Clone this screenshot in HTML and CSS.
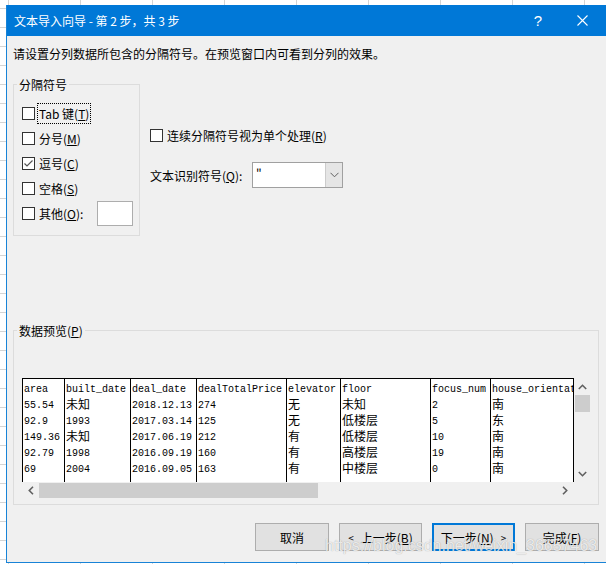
FILE: index.html
```html
<!DOCTYPE html>
<html lang="zh">
<head>
    <meta charset="UTF-8">
    <title>文本导入向导 - 第 2 步，共 3 步</title>
    <link rel="stylesheet" href="styles.css">
</head>
<body>
    <div class="dialog">
        <div class="titlebar">
            <span class="title">文本导入向导 - 第 2 步，共 3 步</span>
            <span class="help">?</span>
            <span class="close">
                <svg width="11" height="11" viewBox="0 0 11 11"><path d="M0.5 0.5L10.5 10.5M10.5 0.5L0.5 10.5" stroke="#fff" stroke-width="1.1" fill="none"/></svg>
            </span>
        </div>
        <div class="content">
            <p class="intro">请设置分列数据所包含的分隔符号。在预览窗口内可看到分列的效果。</p>
            <div class="options">
                <fieldset class="group delims">
                    <legend>分隔符号</legend>
                    <div class="opt"><span class="box"></span><span class="focus">Tab 键(<u>T</u>)</span></div>
                    <div class="opt"><span class="box"></span>分号(<u>M</u>)</div>
                    <div class="opt"><span class="box"><svg width="11" height="11" viewBox="0 0 11 11"><path d="M1.5 5.5L4 8L9.5 2.5" stroke="#555" stroke-width="1.2" fill="none"/></svg></span>逗号(<u>C</u>)</div>
                    <div class="opt"><span class="box"></span>空格(<u>S</u>)</div>
                    <div class="opt"><span class="box"></span>其他(<u>O</u>):<span class="other-input"></span></div>
                </fieldset>
                <div class="side">
                    <div class="opt short"><span class="box"></span>连续分隔符号视为单个处理(<u>R</u>)</div>
                    <div class="qual">
                        <span class="qual-label">文本识别符号(<u>Q</u>):</span>
                        <div class="combo">
                            <span class="val">"</span>
                            <span class="drop"><svg width="9" height="6" viewBox="0 0 9 6"><path d="M0.5 0.8L4.5 4.8L8.5 0.8" stroke="#606060" stroke-width="1" fill="none"/></svg></span>
                        </div>
                    </div>
                </div>
            </div>
            <fieldset class="group preview">
                <legend>数据预览(<u>P</u>)</legend>
                <div class="pv-main">
                    <div class="grid">
                        <div class="col" style="width: 42px">
                            <div class="cell">area</div>
                            <div class="cell">55.54</div>
                            <div class="cell">92.9</div>
                            <div class="cell">149.36</div>
                            <div class="cell">92.79</div>
                            <div class="cell">69</div>
                        </div>
                        <div class="col" style="width: 66px">
                            <div class="cell">built_date</div>
                            <div class="cell zh">未知</div>
                            <div class="cell">1993</div>
                            <div class="cell zh">未知</div>
                            <div class="cell">1998</div>
                            <div class="cell">2004</div>
                        </div>
                        <div class="col" style="width: 66px">
                            <div class="cell">deal_date</div>
                            <div class="cell">2018.12.13</div>
                            <div class="cell">2017.03.14</div>
                            <div class="cell">2017.06.19</div>
                            <div class="cell">2016.09.19</div>
                            <div class="cell">2016.09.05</div>
                        </div>
                        <div class="col" style="width: 90px">
                            <div class="cell">dealTotalPrice</div>
                            <div class="cell">274</div>
                            <div class="cell">125</div>
                            <div class="cell">212</div>
                            <div class="cell">160</div>
                            <div class="cell">163</div>
                        </div>
                        <div class="col" style="width: 54px">
                            <div class="cell">elevator</div>
                            <div class="cell zh">无</div>
                            <div class="cell zh">无</div>
                            <div class="cell zh">有</div>
                            <div class="cell zh">有</div>
                            <div class="cell zh">有</div>
                        </div>
                        <div class="col" style="width: 90px">
                            <div class="cell">floor</div>
                            <div class="cell zh">未知</div>
                            <div class="cell zh">低楼层</div>
                            <div class="cell zh">低楼层</div>
                            <div class="cell zh">高楼层</div>
                            <div class="cell zh">中楼层</div>
                        </div>
                        <div class="col" style="width: 60px">
                            <div class="cell">focus_num</div>
                            <div class="cell">2</div>
                            <div class="cell">5</div>
                            <div class="cell">10</div>
                            <div class="cell">19</div>
                            <div class="cell">0</div>
                        </div>
                        <div class="col" style="width: 83px">
                            <div class="cell">house_orientat</div>
                            <div class="cell zh">南</div>
                            <div class="cell zh">东</div>
                            <div class="cell zh">南</div>
                            <div class="cell zh">南</div>
                            <div class="cell zh">南</div>
                        </div>
                    </div>
                    <div class="vscroll">
                        <span class="arrow"><svg width="9" height="6" viewBox="0 0 9 6"><path d="M0.8 5L4.5 1.3L8.2 5" stroke="#606060" stroke-width="1.6" fill="none"/></svg></span>
                        <span class="vthumb"></span>
                        <span class="spacer"></span>
                        <span class="arrow"><svg width="9" height="6" viewBox="0 0 9 6"><path d="M0.8 1L4.5 4.7L8.2 1" stroke="#606060" stroke-width="1.6" fill="none"/></svg></span>
                    </div>
                </div>
                <div class="hrow">
                    <div class="hscroll">
                        <span class="arrow"><svg width="6" height="9" viewBox="0 0 6 9"><path d="M5 0.8L1.3 4.5L5 8.2" stroke="#606060" stroke-width="1.6" fill="none"/></svg></span>
                        <span class="hthumb"></span>
                        <span class="spacer"></span>
                        <span class="arrow"><svg width="6" height="9" viewBox="0 0 6 9"><path d="M1 0.8L4.7 4.5L1 8.2" stroke="#606060" stroke-width="1.6" fill="none"/></svg></span>
                    </div>
                    <div class="corner"></div>
                </div>
            </fieldset>
            <div class="buttons">
                <button class="btn" style="width: 74px">取消</button>
                <button class="btn" style="width: 83px"><span class="lt">&lt;</span>上一步(<u>B</u>)</button>
                <button class="btn primary" style="width: 83px">下一步(<u>N</u>)<span class="gt">&gt;</span></button>
                <button class="btn" style="width: 74px">完成(<u>F</u>)</button>
            </div>
        </div>
        <div class="watermark">https://blog.csdn.net/weixin_36657463</div>
    </div>
</body>
</html>
```

FILE: styles.css
```css
html, body {
    margin: 0;
    padding: 0;
    height: 100%;
    overflow: hidden;
}
body {
    background-color: #fff;
    background-image:
        linear-gradient(to right, #d4d4d4 1px, transparent 1px),
        linear-gradient(to bottom, #d4d4d4 1px, transparent 1px);
    background-size: 72px 100%, 100% 19px;
    background-position: 8px 0, 0 8px;
    font-family: "Noto Sans CJK SC", "Noto Sans", sans-serif;
    font-size: 12px;
    color: #000;
}
.dialog {
    position: relative;
    box-sizing: border-box;
    width: 602px;
    height: 558px;
    margin: 5px 0 0 6px;
    border: 1px solid #1883d7;
    border-top: none;
    background: #f0f0f0;
    display: flex;
    flex-direction: column;
}
.titlebar {
    display: flex;
    align-items: center;
    height: 31px;
    flex: none;
    background: #0078d7;
    color: #fff;
    padding-left: 7px;
}
.title {
    flex: 1;
    line-height: 17px;
}
.help {
    width: 42px;
    text-align: center;
    font: 15px "Liberation Sans", sans-serif;
}
.close {
    width: 46px;
    margin-right: 2px;
    display: flex;
    justify-content: center;
}
.content {
    flex: 1;
    padding: 9px 8px 0 6px;
    display: flex;
    flex-direction: column;
}
.intro {
    margin: 0;
    line-height: 17px;
}
.options {
    display: flex;
    margin-top: 14px;
}
.group {
    margin: 0;
    min-width: 0;
    border: 1px solid #dcdcdc;
}
.group legend {
    padding: 0 2px;
    margin-left: -5px;
    line-height: 17px;
}
.delims {
    box-sizing: border-box;
    width: 127px;
    padding: 8px 0 9px 8px;
}
.opt {
    display: flex;
    align-items: center;
    height: 25px;
    line-height: 17px;
    white-space: nowrap;
}
.opt.short {
    height: 17px;
}
.box {
    box-sizing: border-box;
    width: 13px;
    height: 13px;
    flex: none;
    margin-right: 4px;
    border: 1px solid #333;
    background: #fff;
    display: flex;
    align-items: center;
    justify-content: center;
}
.focus {
    outline: 1px dotted #000;
    outline-offset: 1px;
}
.other-input {
    box-sizing: border-box;
    width: 36px;
    height: 25px;
    margin-left: auto;
    margin-right: 6px;
    border: 1px solid #adadad;
    background: #fff;
}
.side {
    margin-left: 10px;
    padding-top: 51px;
}
.qual {
    display: flex;
    align-items: center;
    margin-top: 18px;
}
.qual-label {
    width: 102px;
    line-height: 17px;
}
.combo {
    box-sizing: border-box;
    width: 91px;
    height: 26px;
    border: 1px solid #a0a0a0;
    background: #fff;
    display: flex;
}
.combo .val {
    flex: 1;
    padding-left: 3px;
    line-height: 22px;
}
.combo .drop {
    width: 16px;
    background: #e5e5e5;
    border-left: 1px solid #cccccc;
    display: flex;
    align-items: center;
    justify-content: center;
}
.preview {
    margin-top: 86px;
    padding: 39px 7px 5px 8px;
}
.pv-main {
    display: flex;
    height: 104px;
}
.grid {
    box-sizing: border-box;
    display: flex;
    width: 551px;
    border-top: 1px solid #000;
    background: #fff;
    overflow: hidden;
    font: 10px "Liberation Mono", "Noto Sans CJK SC", monospace;
}
.col {
    box-sizing: border-box;
    flex: none;
    padding: 1px 0 0 1px;
    border-left: 1px solid #000;
    overflow: hidden;
    white-space: nowrap;
}
.cell {
    box-sizing: border-box;
    height: 16px;
    padding-top: 2px;
    line-height: 16px;
}
.cell.zh {
    padding-top: 0;
    font: 12px "Noto Sans CJK SC", sans-serif;
    line-height: 16px;
}
.vscroll {
    box-sizing: border-box;
    width: 17px;
    border-left: 1px solid #000;
    display: flex;
    flex-direction: column;
}
.vscroll .arrow {
    height: 17px;
    display: flex;
    align-items: center;
    justify-content: center;
}
.vthumb {
    height: 17px;
    margin-left: 1px;
    background: #cdcdcd;
}
.spacer {
    flex: 1;
}
.hrow {
    display: flex;
    height: 17px;
}
.hscroll {
    width: 551px;
    display: flex;
    align-items: center;
}
.hscroll .arrow {
    width: 17px;
    display: flex;
    justify-content: center;
}
.hthumb {
    width: 279px;
    height: 15px;
    background: #cdcdcd;
}
.corner {
    flex: 1;
}
.buttons {
    display: flex;
    justify-content: flex-end;
    gap: 10px;
    margin-top: 18px;
}
.btn {
    box-sizing: border-box;
    height: 28px;
    padding: 0;
    border: 1px solid #adadad;
    background: #e1e1e1;
    font: 12px "Noto Sans CJK SC", sans-serif;
    color: #000;
    display: flex;
    align-items: center;
    justify-content: center;
}
.btn.primary {
    border: 2px solid #0078d7;
}
.btn .lt {
    font-size: 10px;
    margin-right: 7px;
}
.btn .gt {
    font-size: 10px;
    margin-left: 7px;
}
.watermark {
    position: absolute;
    left: 318px;
    top: 532px;
    font: 16px "Liberation Sans", sans-serif;
    line-height: 18px;
    color: rgba(255, 255, 255, 0.8);
    text-shadow: 0 0 1px rgba(0, 0, 0, 0.35);
    white-space: nowrap;
}
```
